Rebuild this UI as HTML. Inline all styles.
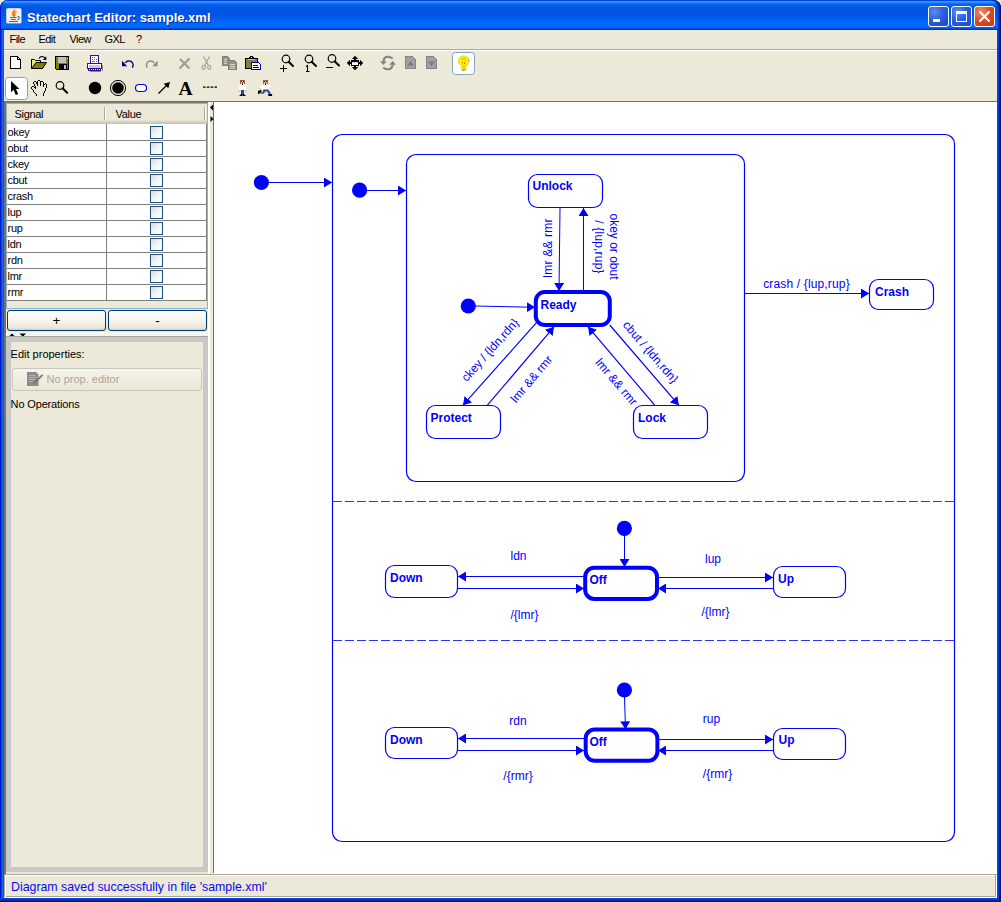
<!DOCTYPE html>
<html><head><meta charset="utf-8">
<style>
*{box-sizing:border-box;margin:0;padding:0}
html,body{width:1001px;height:902px;overflow:hidden;background:#ece9d8}
body{font-family:"Liberation Sans",sans-serif;font-size:11px;color:#000;position:relative}
.abs{position:absolute}
#frame{position:absolute;left:0;top:0;width:1001px;height:902px;background:#ece9d8}
#title{position:absolute;left:0;top:0;width:1001px;height:30px;
 background:linear-gradient(#0047e0 0.5px,#3c94ff 1.5px,#2a8aff 2.5px,#0a70ff 3.5px,#0365f2 4.5px,#025dea 5.5px,#0059e5 6.5px,#0056e2 7.5px,#0056e2 14.5px,#0057e5 15.5px,#005cee 17.5px,#0062f8 19.5px,#0068ff 21.5px,#0069ff 26.5px,#0061f4 27.5px,#0050dc 28.5px,#0032c4 29.5px);
 border-radius:8px 8px 0 0;box-shadow:inset -1.5px 0 0 #00138c,inset -3px 0 1px #0030b8,inset 1px 0 0 #0019cf}
#title .txt{position:absolute;left:27px;top:10px;color:#fff;font-weight:bold;font-size:13px;line-height:16px;white-space:nowrap;text-shadow:1px 1px 0 #0a2a8a}
#bl{position:absolute;left:0;top:30px;width:4px;height:870px;background:linear-gradient(90deg,#0019cf 0.5px,#0a3ee0 1.5px,#166aee 2.5px,#0855dd 3.5px)}
#br{position:absolute;left:997px;top:30px;width:4px;height:872px;background:linear-gradient(90deg,#0848e0 0.5px,#023cd8 1.5px,#001ea0 2.5px,#00138c 3.5px)}
#bb{position:absolute;left:0;top:898px;width:1001px;height:4px;background:linear-gradient(180deg,#0441dc 0.5px,#0238d0 1.5px,#0024a8 2.5px,#00138c 3.5px)}
.tb{position:absolute;top:6px;width:21px;height:21px;border:1px solid #fff;border-radius:3px}
.tb.b{background:radial-gradient(circle at 30% 25%,#5b8df5 0,#2a5fe0 45%,#1a45c8 100%)}
.tb.r{background:radial-gradient(circle at 30% 25%,#f08a6a 0,#dc4a22 50%,#c03612 100%)}
#menu{position:absolute;left:4px;top:30px;width:993px;height:19px}
#menu span{position:absolute;top:2.6px;line-height:13px;font-size:11px;letter-spacing:-0.55px}
.hl{position:absolute;left:4px;width:993px;height:1px}
#canvas{position:absolute;left:214px;top:102px;width:783px;height:772px;background:#fff}
#status{position:absolute;left:4px;top:875px;width:993px;height:22px}
#status .t{position:absolute;left:7px;top:4.5px;font-size:12.35px;color:#0808f4;line-height:14px;white-space:nowrap}

.lt{font-size:11px;line-height:13px;white-space:nowrap;letter-spacing:-0.35px;margin-top:1px;margin-left:0.6px}
.cb{width:13px;height:13px;border:1px solid #1c5180;background:linear-gradient(135deg,#dcdcd7 0,#f3f3ef 50%,#fff 100%)}
.btn{border:1px solid #003c74;border-radius:3px;background:linear-gradient(#fff 0,#f6f5ef 50%,#ece9d8 85%,#d6d0c5 100%);text-align:center;font-size:13.5px;line-height:20px}
</style></head><body>
<div id="frame">
<div id="title"><div class="txt">Statechart Editor: sample.xml</div>
<svg class="abs" style="left:6px;top:8px" width="16" height="16" viewBox="0 0 16 16"><rect x="0" y="0" width="16" height="16" rx="1.5" fill="#5c7fa8"/><rect x="0.3" y="0.3" width="15" height="15" rx="1.5" fill="#f1f0ec"/><path d="M8.6 2.4C6 4.5 6.5 6.5 7.8 8.2M10 4C7.8 5.5 8.3 6.8 8.9 7.6" fill="none" stroke="#e87404" stroke-width="1.5" stroke-linecap="round"/><path d="M4 9.5H10.5M4.8 11.5H9.8M3 13.5H12" stroke="#4a6c90" stroke-width="1"/><path d="M11.5 8.3C13.8 8.3 13.8 11.5 11.3 11.8" fill="none" stroke="#4a6c90" stroke-width="1.1"/></svg>
<div class="tb b" style="left:928px"><div class="abs" style="left:4px;top:12px;width:7px;height:3px;background:#fff"></div></div>
<div class="tb b" style="left:951px"><div class="abs" style="left:4px;top:4px;width:11px;height:11px;border:1px solid #fff;border-top:3px solid #fff"></div></div>
<div class="tb r" style="left:974px"><svg class="abs" style="left:0;top:0" width="19" height="19" viewBox="0 0 19 19"><path d="M4.5 4.5L14.5 14.5M14.5 4.5L4.5 14.5" stroke="#fff" stroke-width="2.2"/></svg></div>
</div>
<div id="bl"></div><div id="br"></div><div id="bb"></div>
<div class="abs" style="left:999px;top:898px;width:2px;height:4px;background:#00138c"></div><div class="abs" style="left:210px;top:101px;width:3px;height:2px;background:#ece9d8"></div><div id="menu"><span style="left:5.5px">File</span><span style="left:34.5px">Edit</span><span style="left:65.5px">View</span><span style="left:100.5px">GXL</span><span style="left:132px">?</span></div>
<div class="hl" style="top:49px;background:#aca899"></div>
<div class="hl" style="top:50px;background:#fff"></div>
<svg class="abs" style="left:4px;top:51px" width="500" height="50" viewBox="4 51 500 50">
<g shape-rendering="crispEdges"><path d="M10.5 56.5H17.5L20.5 59.5V68.5H10.5z" fill="#fff" stroke="#000"/><path d="M17.5 56.5V59.5H20.5" fill="none" stroke="#000"/></g>
<g><path d="M31.5 59.5H34.5L35.5 60.5H40.5V62.5H31.5z" fill="#ffff80" stroke="#000" stroke-width="1"/><rect x="32" y="61" width="8" height="7" fill="#e8e868"/><path d="M31.5 59.5V68.5H42.5" fill="none" stroke="#000"/><path d="M31.8 68.5L36 62.5H46.5L42.5 68.5z" fill="#808000" stroke="#000" stroke-width="1" stroke-linejoin="round"/><path d="M39 58.5C40.5 55.8 43.5 55.8 45 58.2" fill="none" stroke="#000" stroke-width="1.1"/><path d="M46.3 56.3V60H42.8z" fill="#000"/></g>
<g shape-rendering="crispEdges"><path d="M55.5 56.5H68.5V69.5H56.5L55.5 68.5z" fill="#808000" stroke="#000"/><rect x="58" y="57" width="8" height="6" fill="#c0c0c0"/><rect x="59" y="64" width="8" height="5" fill="#000"/><rect x="64" y="65" width="2" height="4" fill="#c0c0c0"/><rect x="66.6" y="57.6" width="1" height="1" fill="#fff"/></g>
<g shape-rendering="crispEdges"><path d="M102.5 65V70.5M90 71.5H101" stroke="#8a8c78"/><rect x="90.5" y="55.5" width="8" height="8" fill="#fff" stroke="#3a0a98"/><path d="M92 57.5H93M94 57.5H95M92 59.5H93M94 59.5H95M96 59.5H97M92 61.5H95M96 61.5H97" stroke="#707070"/><rect x="87.5" y="63.5" width="14" height="5" fill="#fff" stroke="#3a0a98"/><rect x="89" y="65" width="11" height="3" fill="#c8c8c8"/><rect x="88.5" y="68.5" width="12" height="2" fill="#3a0a98" stroke="#3a0a98"/><path d="M89 69.5H100" stroke="#e8e8e8" stroke-dasharray="1.3 0.7"/></g>
<g><path d="M125.3 62.8A4.1 4.1 0 1 1 132.3 67.6" fill="none" stroke="#000080" stroke-width="1.5"/><path d="M122 60.8V66.2H127.2z" fill="#000080"/></g>
<g><path d="M154.2 62.8A4.1 4.1 0 1 0 147.2 67.6" fill="none" stroke="#8e8c82" stroke-width="1.5"/><path d="M157.5 60.8V66.2H152.3z" fill="#8e8c82"/></g>
<g stroke="#a09d90" stroke-width="2.3" stroke-linecap="butt"><path d="M180 59L189.5 68.5"/><path d="M189.5 58.5L179.5 68.5"/></g>
<g fill="none" stroke="#a09d90" stroke-width="1.1"><path d="M203.5 56.5L208.3 65.5"/><path d="M209.5 56.5L204.7 65.5"/><ellipse cx="203.7" cy="67.3" rx="1.6" ry="2"/><ellipse cx="209.3" cy="67.3" rx="1.6" ry="2"/></g>
<g shape-rendering="crispEdges"><path d="M222.5 56.5H227.5L229.5 58.5V65.5H222.5z" fill="#95938a" stroke="#807e74"/><path d="M228.5 60.5H234.5L236.5 62.5V69.5H228.5z" fill="#95938a" stroke="#807e74"/><path d="M230 64H235M230 66H235M230 68H235" stroke="#d8d5c8"/><path d="M224 59H227M224 61H227M224 63H227" stroke="#d8d5c8"/></g>
<g shape-rendering="crispEdges"><rect x="245.5" y="58.5" width="12" height="10" fill="#808040" stroke="#000"/><path d="M249.5 58.5V57.5H250.5V56.5H252.5V57.5H253.5V58.5z" fill="#ffff00" stroke="#000"/><rect x="248" y="59" width="7" height="1" fill="#c0c0c0"/><path d="M251.5 62.5H258.5L260.5 64.5V69.5H251.5z" fill="#fff" stroke="#0000a0"/><path d="M253 65H258M253 67H259" stroke="#0000a0"/></g>
<g><circle cx="286" cy="59" r="3.8" fill="none" stroke="#000" stroke-width="1.2"/><path d="M288.6 61.8L293 66" stroke="#000" stroke-width="2" stroke-linecap="round"/><path d="M280 68.5H287M283.5 65V72" stroke="#000" stroke-width="1" shape-rendering="crispEdges"/></g>
<g><circle cx="309" cy="59" r="3.8" fill="none" stroke="#000" stroke-width="1.2"/><path d="M311.6 61.8L316 66" stroke="#000" stroke-width="2" stroke-linecap="round"/><path d="M306 66.5L307.5 65.5V71M306 71.5H309.5" stroke="#000" stroke-width="1.1" fill="none"/></g>
<g><circle cx="332" cy="58.5" r="3.8" fill="none" stroke="#000" stroke-width="1.2"/><path d="M334.6 61.3L339 65.5" stroke="#000" stroke-width="2" stroke-linecap="round"/><path d="M326 67.5H333" stroke="#000" stroke-width="1" shape-rendering="crispEdges"/></g>
<g fill="#000"><path d="M355 55.8L358.2 59H351.8z"/><path d="M355 70.2L358.2 67H351.8z"/><path d="M346.8 63L350 59.8V66.2z"/><path d="M363.2 63L360 59.8V66.2z"/><rect x="354" y="58.5" width="2" height="9"/><rect x="349.5" y="62" width="11" height="2"/><rect x="351.5" y="60.5" width="7" height="5" fill="#fff" stroke="#000" shape-rendering="crispEdges"/><rect x="352" y="61" width="6" height="1.2" fill="#000080"/></g>
<g><path d="M392.6 58.8C391.2 56.6 389 56.6 386.8 56.7C384.6 57.4 383.5 59 383.3 61.6" fill="none" stroke="#838383" stroke-width="2"/><path d="M380 61.2H386.9L383.3 65z" fill="#838383"/></g><g transform="rotate(180 388 63)"><path d="M392.6 58.8C391.2 56.6 389 56.6 386.8 56.7C384.6 57.4 383.5 59 383.3 61.6" fill="none" stroke="#838383" stroke-width="2"/><path d="M380 61.2H386.9L383.3 65z" fill="#838383"/></g><g shape-rendering="crispEdges"><path d="M405.5 56.5H412.5L415.5 59.5V68.5H405.5z" fill="#a0a0a0" stroke="#858585"/><path d="M426.5 56.5H433.5L436.5 59.5V68.5H426.5z" fill="#a0a0a0" stroke="#858585"/></g><path d="M410.5 61L414 65.5H407z" fill="#7c7c7c"/><path d="M431.5 66L435 61.5H428z" fill="#7c7c7c"/>
<rect x="452.5" y="52.5" width="22" height="22" rx="3" fill="#fff" stroke="#86a3be"/>
<g><path d="M460 64.5L462.3 68.5H465.5L467.5 64.5z" fill="#f4e000"/><ellipse cx="463.7" cy="60.9" rx="5.3" ry="5.1" fill="#fff200" stroke="#d8c800" stroke-width="0.6"/><rect x="461.2" y="68" width="4.8" height="2.8" rx="0.8" fill="#e8d400"/><path d="M461.3 59.8C462.5 58.3 465 58.3 465.8 59.6M462.5 61.5V63.5M465.5 61L465 62" stroke="#8c8c10" stroke-width="0.9" fill="none" opacity="0.75"/><rect x="464" y="62.8" width="1" height="1" fill="#a03010"/><rect x="468" y="60" width="0.8" height="1" fill="#a03010"/><rect x="463" y="64" width="1" height="1" fill="#c8c8d8"/><rect x="463" y="70" width="1.2" height="1" fill="#f05010"/><rect x="465" y="69" width="1" height="1" fill="#909010"/></g>
<rect x="5.5" y="77.5" width="22" height="22" rx="3" fill="#fff" stroke="#86a3be"/>
<path d="M11 81V92.3L13.6 89.8L15.8 95L18.2 94L16 89H19.5z" fill="#000"/>
<path d="M38 80h1v1h-1zM39 80h1v1h-1zM34 81h1v1h-1zM35 81h1v1h-1zM37 81h1v1h-1zM40 81h1v1h-1zM41 81h1v1h-1zM42 81h1v1h-1zM33 82h1v1h-1zM36 82h1v1h-1zM37 82h1v1h-1zM40 82h1v1h-1zM43 82h1v1h-1zM33 83h1v1h-1zM36 83h1v1h-1zM37 83h1v1h-1zM40 83h1v1h-1zM43 83h1v1h-1zM45 83h1v1h-1zM34 84h1v1h-1zM37 84h1v1h-1zM40 84h1v1h-1zM43 84h1v1h-1zM44 84h1v1h-1zM46 84h1v1h-1zM34 85h1v1h-1zM37 85h1v1h-1zM40 85h1v1h-1zM43 85h1v1h-1zM46 85h1v1h-1zM32 86h1v1h-1zM33 86h1v1h-1zM35 86h1v1h-1zM43 86h1v1h-1zM46 86h1v1h-1zM31 87h1v1h-1zM34 87h1v1h-1zM35 87h1v1h-1zM46 87h1v1h-1zM31 88h1v1h-1zM35 88h1v1h-1zM45 88h1v1h-1zM32 89h1v1h-1zM45 89h1v1h-1zM33 90h1v1h-1zM45 90h1v1h-1zM33 91h1v1h-1zM44 91h1v1h-1zM34 92h1v1h-1zM44 92h1v1h-1zM35 93h1v1h-1zM43 93h1v1h-1zM36 94h1v1h-1zM43 94h1v1h-1zM36 95h1v1h-1zM43 95h1v1h-1z" fill="#000" shape-rendering="crispEdges"/>
<g><circle cx="60" cy="85.5" r="3.8" fill="none" stroke="#000" stroke-width="1.2"/><path d="M62.6 88.3L67.2 92.8" stroke="#000" stroke-width="2" stroke-linecap="round"/></g>
<circle cx="95" cy="88" r="6.2" fill="#000"/>
<circle cx="118" cy="88" r="7.6" fill="none" stroke="#000" stroke-width="1"/><circle cx="118" cy="88" r="5.8" fill="#000"/>
<rect x="135.5" y="84.5" width="11" height="7" rx="3.5" fill="#fff" stroke="#0000ff" stroke-width="1.2"/>
<path d="M158.5 93.5L167 85" stroke="#000" stroke-width="1.2"/><path d="M170 82L168.3 88.3L163.7 83.7z" fill="#000"/>
<text x="178.6" y="95" font-family="Liberation Serif, serif" font-weight="bold" font-size="19.5" fill="#000">A</text>
<path d="M203 87.2H217" stroke="#000" stroke-width="1.3" stroke-dasharray="2.6 1.2"/>
<g shape-rendering="crispEdges"><rect x="240" y="80" width="5" height="1" fill="#806848"/><rect x="240" y="81" width="1" height="3" fill="#806848"/><rect x="244" y="81" width="1" height="3" fill="#806848"/><rect x="241" y="81" width="3" height="3" fill="#f8c8a0"/><rect x="241" y="81" width="1" height="1" fill="#1010f0"/><rect x="243" y="81" width="1" height="1" fill="#1010f0"/><rect x="242" y="82" width="1" height="2" fill="#f01010"/><rect x="242" y="84" width="1" height="1" fill="#101010"/><path d="M240 85H245V86H246V90H245V89.5H240V90H239V86H240z" fill="#fff"/><rect x="238" y="90" width="2" height="2" fill="#f8c8a0"/><rect x="245" y="90" width="2" height="2" fill="#f8c8a0"/><rect x="241" y="89.5" width="3" height="5" fill="#2c44a0"/></g><path d="M239 96L241.2 94H242.3V96zM246 96L243.8 94H242.7V96z" fill="#000"/><g shape-rendering="crispEdges"><rect x="263" y="80" width="5" height="1" fill="#806848"/><rect x="263" y="81" width="1" height="3" fill="#806848"/><rect x="267" y="81" width="1" height="3" fill="#806848"/><rect x="264" y="81" width="3" height="3" fill="#f8c8a0"/><rect x="264" y="81" width="1" height="1" fill="#1010f0"/><rect x="266" y="81" width="1" height="1" fill="#1010f0"/><rect x="265" y="82" width="1" height="2" fill="#f01010"/><rect x="265" y="84" width="1" height="1" fill="#101010"/></g><path d="M261 85.5H268.5L271.5 84.8V86.5L268 88V89.5H262V88.5H260V86.5z" fill="#fff"/><rect x="271" y="84" width="2" height="1.2" fill="#f8c8a0"/><rect x="259.3" y="88" width="1.5" height="2" fill="#f8c8a0"/><path d="M263.5 89.5H268L270.5 92.5V95H268.5V93L266 91L263.5 93.8H260.5V92.5H262.5z" fill="#2c44a0"/><path d="M258 90.8L261.5 90V92.3L259.5 93V94H258z" fill="#000"/><rect x="268.3" y="94" width="3.8" height="2" fill="#000"/></svg>
<div id="canvas"></div>
<div class="abs" style="left:4px;top:101px;width:993px;height:1px;background:#757264"></div>
<div class="abs" style="left:4px;top:102px;width:204px;height:1px;background:#7d7a6c"></div><div class="abs" style="left:4px;top:101px;width:2px;height:773px;background:#757264"></div>
<div class="abs" style="left:6px;top:103px;width:202px;height:206px;border:1px solid #8fb0d0;background:#ece9d8"></div>
<div class="abs" style="left:7px;top:104px;width:200px;height:20px;background:linear-gradient(#ece9d8 0,#ece9d8 80%,#e0dccb 85%,#d6d2c2 90%,#cbc7b8 95%,#c5c2b2 100%)"></div>
<div class="abs" style="left:104px;top:107px;width:1px;height:13px;background:#aca899"></div><div class="abs" style="left:105px;top:107px;width:1px;height:13px;background:#fff"></div>
<div class="abs" style="left:204px;top:107px;width:1px;height:13px;background:#aca899"></div><div class="abs" style="left:205px;top:107px;width:1px;height:13px;background:#fff"></div>
<div class="abs lt" style="left:14px;top:107px">Signal</div><div class="abs lt" style="left:115px;top:107px">Value</div>
<div class="abs" style="left:7px;top:124px;width:200px;height:177px;background:#fff"></div>
<div class="abs lt" style="left:7px;top:125px">okey</div>
<div class="abs" style="left:7px;top:140px;width:200px;height:1px;background:#808080"></div>
<div class="abs cb" style="left:150px;top:126px"></div>
<div class="abs lt" style="left:7px;top:141px">obut</div>
<div class="abs" style="left:7px;top:156px;width:200px;height:1px;background:#808080"></div>
<div class="abs cb" style="left:150px;top:142px"></div>
<div class="abs lt" style="left:7px;top:157px">ckey</div>
<div class="abs" style="left:7px;top:172px;width:200px;height:1px;background:#808080"></div>
<div class="abs cb" style="left:150px;top:158px"></div>
<div class="abs lt" style="left:7px;top:173px">cbut</div>
<div class="abs" style="left:7px;top:188px;width:200px;height:1px;background:#808080"></div>
<div class="abs cb" style="left:150px;top:174px"></div>
<div class="abs lt" style="left:7px;top:189px">crash</div>
<div class="abs" style="left:7px;top:204px;width:200px;height:1px;background:#808080"></div>
<div class="abs cb" style="left:150px;top:190px"></div>
<div class="abs lt" style="left:7px;top:205px">lup</div>
<div class="abs" style="left:7px;top:220px;width:200px;height:1px;background:#808080"></div>
<div class="abs cb" style="left:150px;top:206px"></div>
<div class="abs lt" style="left:7px;top:221px">rup</div>
<div class="abs" style="left:7px;top:236px;width:200px;height:1px;background:#808080"></div>
<div class="abs cb" style="left:150px;top:222px"></div>
<div class="abs lt" style="left:7px;top:237px">ldn</div>
<div class="abs" style="left:7px;top:252px;width:200px;height:1px;background:#808080"></div>
<div class="abs cb" style="left:150px;top:238px"></div>
<div class="abs lt" style="left:7px;top:253px">rdn</div>
<div class="abs" style="left:7px;top:268px;width:200px;height:1px;background:#808080"></div>
<div class="abs cb" style="left:150px;top:254px"></div>
<div class="abs lt" style="left:7px;top:269px">lmr</div>
<div class="abs" style="left:7px;top:284px;width:200px;height:1px;background:#808080"></div>
<div class="abs cb" style="left:150px;top:270px"></div>
<div class="abs lt" style="left:7px;top:285px">rmr</div>
<div class="abs" style="left:7px;top:300px;width:200px;height:1px;background:#808080"></div>
<div class="abs cb" style="left:150px;top:286px"></div>
<div class="abs" style="left:106px;top:124px;width:1px;height:177px;background:#808080"></div>
<div class="abs" style="left:206px;top:124px;width:1px;height:177px;background:#808080"></div>
<div class="abs btn" style="left:7px;top:310px;width:99px;height:21px">+</div>
<div class="abs btn" style="left:108px;top:310px;width:99px;height:21px">-</div>

<div class="abs" style="left:6px;top:332px;width:202px;height:4px;background:#f7f5ee"></div><svg class="abs" style="left:4px;top:331px" width="30" height="6" viewBox="0 0 30 6"><path d="M5 5.5L8 2.5L11 5.5zM15.5 2.5L22 2.5L18.8 5.8z" fill="#000"/></svg><div class="abs" style="left:6px;top:336px;width:202px;height:1px;background:#a8a599"></div>
<div class="abs" style="left:6px;top:337px;width:202px;height:535px;border:5px solid #c8c8c8;background:#ece9d8"></div>
<div class="abs lt" style="left:10px;top:347px;letter-spacing:0">Edit properties:</div>
<div class="abs" style="left:12px;top:368px;width:190px;height:23px;border:1px solid #c9c7ba;border-radius:3px;background:linear-gradient(#f5f4ea,#ebe8d8)"></div>
<div class="abs lt" style="left:46px;top:372px;color:#aca899;letter-spacing:0">No prop. editor</div>
<svg class="abs" style="left:26px;top:371px" width="18" height="16" viewBox="26 371 18 16"><path d="M27 372H36L38.5 374.5V386H27z" fill="#8c8c8c"/><path d="M29 375.5H35M29 377.5H36.5M29 379.5H35M29 381.5H33" stroke="#b4b4b0" stroke-width="1"/><path d="M33 384.5L33.8 381.8L42 374.2L43.3 375.6L35.3 383.3z" fill="#787878"/></svg>
<div class="abs lt" style="left:10px;top:397px;letter-spacing:-0.15px">No Operations</div>
<div class="abs" style="left:208px;top:102px;width:2px;height:772px;background:#fff"></div><div class="abs" style="left:210px;top:102px;width:3px;height:772px;background:#ece9d8"></div>
<div class="abs" style="left:213px;top:102px;width:1px;height:771px;background:#716f64"></div>
<svg class="abs" style="left:209px;top:103px" width="6" height="20" viewBox="0 0 6 20"><path d="M4 1.5V7.5L1 4.5zM1.5 13V19L4.5 16z" fill="#000"/></svg>
<svg class="abs" style="left:214px;top:102px" width="783" height="771" viewBox="214 102 783 771" font-family="Liberation Sans, sans-serif" font-size="12" fill="#0000ff">
<defs>
<marker id="ah" viewBox="0 0 8 10" refX="8" refY="5" markerWidth="8" markerHeight="10" markerUnits="userSpaceOnUse" orient="auto"><path d="M0 0L8 5L0 10z" fill="#0000ff"/></marker>
</defs>
<g fill="none" stroke="#0000ff" stroke-width="1">
<rect x="332.5" y="134.5" width="622" height="707" rx="9.5" ry="9.5" stroke-width="1.2"/>
<rect x="406.5" y="154.5" width="338" height="327" rx="9.5" ry="9.5" stroke-width="1.2"/>
<path d="M333 501.5H954M333 640.5H954" stroke-dasharray="9 3" stroke="#3030ff"/>
<rect x="528.5" y="174.5" width="74" height="33" rx="9" stroke-width="1.2"/>
<rect x="426.5" y="405.5" width="74" height="33" rx="9" stroke-width="1.2"/>
<rect x="633.5" y="405.5" width="74" height="33" rx="9" stroke-width="1.2"/>
<rect x="869.5" y="279.5" width="64" height="30" rx="9" stroke-width="1.2"/>
<rect x="385.5" y="565.5" width="72" height="32" rx="9" stroke-width="1.2"/>
<rect x="773.5" y="566.5" width="72" height="31" rx="9" stroke-width="1.2"/>
<rect x="385.5" y="727.5" width="72" height="31" rx="9" stroke-width="1.2"/>
<rect x="773.5" y="728.5" width="72" height="31" rx="9" stroke-width="1.2"/>
<g stroke-width="4">
<rect x="535.8" y="292" width="74" height="33" rx="9"/>
<rect x="585.2" y="567.8" width="71.8" height="31.1" rx="9"/>
<rect x="585.7" y="729.4" width="71.7" height="31.3" rx="9"/>
</g>
<g marker-end="url(#ah)">
<path d="M268 182.5H332"/>
<path d="M366 190.5H406"/>
<path d="M560 208L559 291"/>
<path d="M583.5 291V208"/>
<path d="M475 306L535 307.3"/>
<path d="M536.7 322.4L463 405.2" stroke-width="1.2"/>
<path d="M487.4 405.2L554 326.8" stroke-width="1.2"/>
<path d="M654.7 405.2L588.1 326.8" stroke-width="1.2"/>
<path d="M609.7 325L678.8 405.2" stroke-width="1.2"/>
<path d="M745 293.5H869"/>
<path d="M624.5 535V567"/>
<path d="M584 576.5H458"/>
<path d="M458 588.5H584"/>
<path d="M658 577.5H773"/>
<path d="M773 588.5H658"/>
<path d="M624.5 697L625.5 729.3"/>
<path d="M584 738.5H458"/>
<path d="M458 750.5H584"/>
<path d="M658 739.5H773"/>
<path d="M773 750.5H658"/>
</g>
</g>
<circle cx="261.4" cy="182.5" r="7.6"/>
<circle cx="359.6" cy="190.2" r="7.6"/>
<circle cx="468.3" cy="306" r="7.6"/>
<circle cx="624.4" cy="528.4" r="7.6"/>
<circle cx="624.4" cy="690" r="7.6"/>
<g font-weight="bold">
<text x="532.5" y="190">Unlock</text>
<text x="540.5" y="308.7">Ready</text>
<text x="430.5" y="422">Protect</text>
<text x="638" y="422">Lock</text>
<text x="875" y="296">Crash</text>
<text x="390" y="582">Down</text>
<text x="589.5" y="583.5">Off</text>
<text x="778" y="583">Up</text>
<text x="390" y="744">Down</text>
<text x="589.5" y="745.7">Off</text>
<text x="778.5" y="744">Up</text>
</g>
<g text-anchor="middle">
<text x="806.5" y="288" letter-spacing="0.15">crash / {lup,rup}</text>
<text x="518.5" y="560">ldn</text>
<text x="524.5" y="619">/{lmr}</text>
<text x="713" y="562.5">lup</text>
<text x="715.5" y="616">/{lmr}</text>
<text x="518" y="724.5">rdn</text>
<text x="518" y="779.5">/{rmr}</text>
<text x="711.5" y="722.5">rup</text>
<text x="717.5" y="778">/{rmr}</text>
<text transform="translate(552 248) rotate(-90)" letter-spacing="0.2">lmr &amp;&amp; rmr</text>
<text transform="translate(609.5 246.5) rotate(90)">okey or obut</text>
<text transform="translate(595 247) rotate(90)" letter-spacing="0.18">/ {lup,rup}</text>
<text transform="translate(490 350) rotate(-48.5)" dy="4">ckey / {ldn,rdn}</text>
<text transform="translate(531.5 379) rotate(-49.5)" dy="4">lmr &amp;&amp; rmr</text>
<text transform="translate(616.5 382) rotate(49.5)" dy="4">lmr &amp;&amp; rmr</text>
<text transform="translate(650.5 352) rotate(49.2)" dy="4">cbut / {ldn,rdn}</text>
</g>
</svg>
<div class="hl" style="top:874px;background:#aca899"></div><div class="hl" style="top:875px;background:#fff"></div><div class="hl" style="top:896px;background:#aca899"></div><div class="hl" style="top:897px;background:#fff"></div><div class="abs" style="left:4px;top:875px;width:1px;height:22px;background:#aca899"></div><div class="abs" style="left:5px;top:875px;width:1px;height:22px;background:#fff"></div><div class="abs" style="left:995px;top:875px;width:1px;height:22px;background:#aca899"></div><div class="abs" style="left:996px;top:875px;width:1px;height:23px;background:#fff"></div><div id="status"><div class="t">Diagram saved successfully in file 'sample.xml'</div></div>
</div>
</body></html>
